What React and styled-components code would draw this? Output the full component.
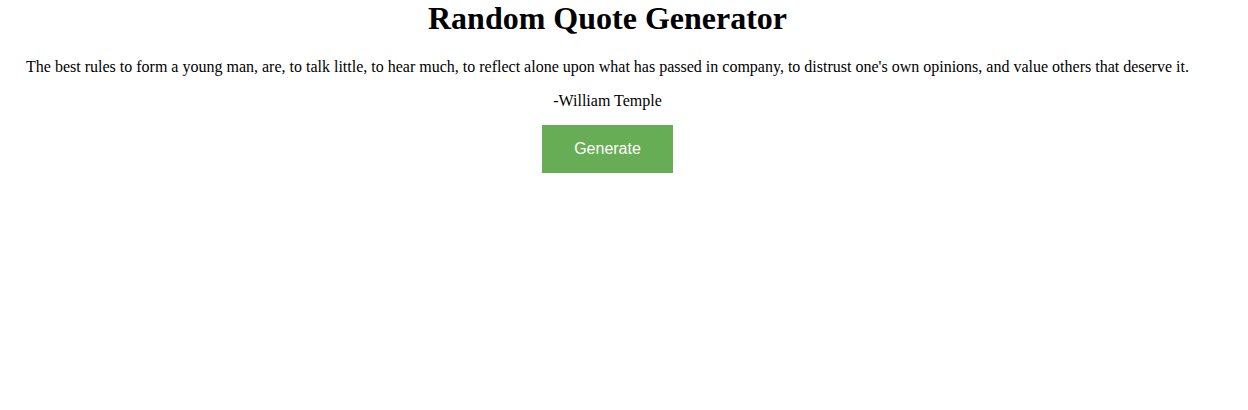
import React from "react";
import styled, { createGlobalStyle } from "styled-components";

const GlobalStyle = createGlobalStyle`
  body {
    margin: 0;
    background: #fff;
    font-family: "Liberation Serif", "Times New Roman", serif;
    color: #000;
  }
`;

const Page = styled.div`
  width: 1215px;
  text-align: center;
`;

const Title = styled.h1`
  margin: 0 0 21px;
  font-size: 32px;
  font-weight: bold;
`;

const Text = styled.p`
  margin: 16px 0 ${(p) => (p.$last ? "15px" : "16px")};
  font-size: 16px;
`;

const Button = styled.button`
  background: #67ad55;
  color: #fff;
  border: none;
  padding: 15px 32px;
  font-family: "Liberation Sans", Arial, sans-serif;
  font-size: 16px;
  cursor: pointer;
`;

export default function App() {
  return (
    <>
      <GlobalStyle />
      <Page>
        <Title>Random Quote Generator</Title>
        <Text>
          The best rules to form a young man, are, to talk little, to hear much, to reflect
          alone upon what has passed in company, to distrust one's own opinions, and value
          others that deserve it.
        </Text>
        <Text $last>-William Temple</Text>
        <Button>Generate</Button>
      </Page>
    </>
  );
}
